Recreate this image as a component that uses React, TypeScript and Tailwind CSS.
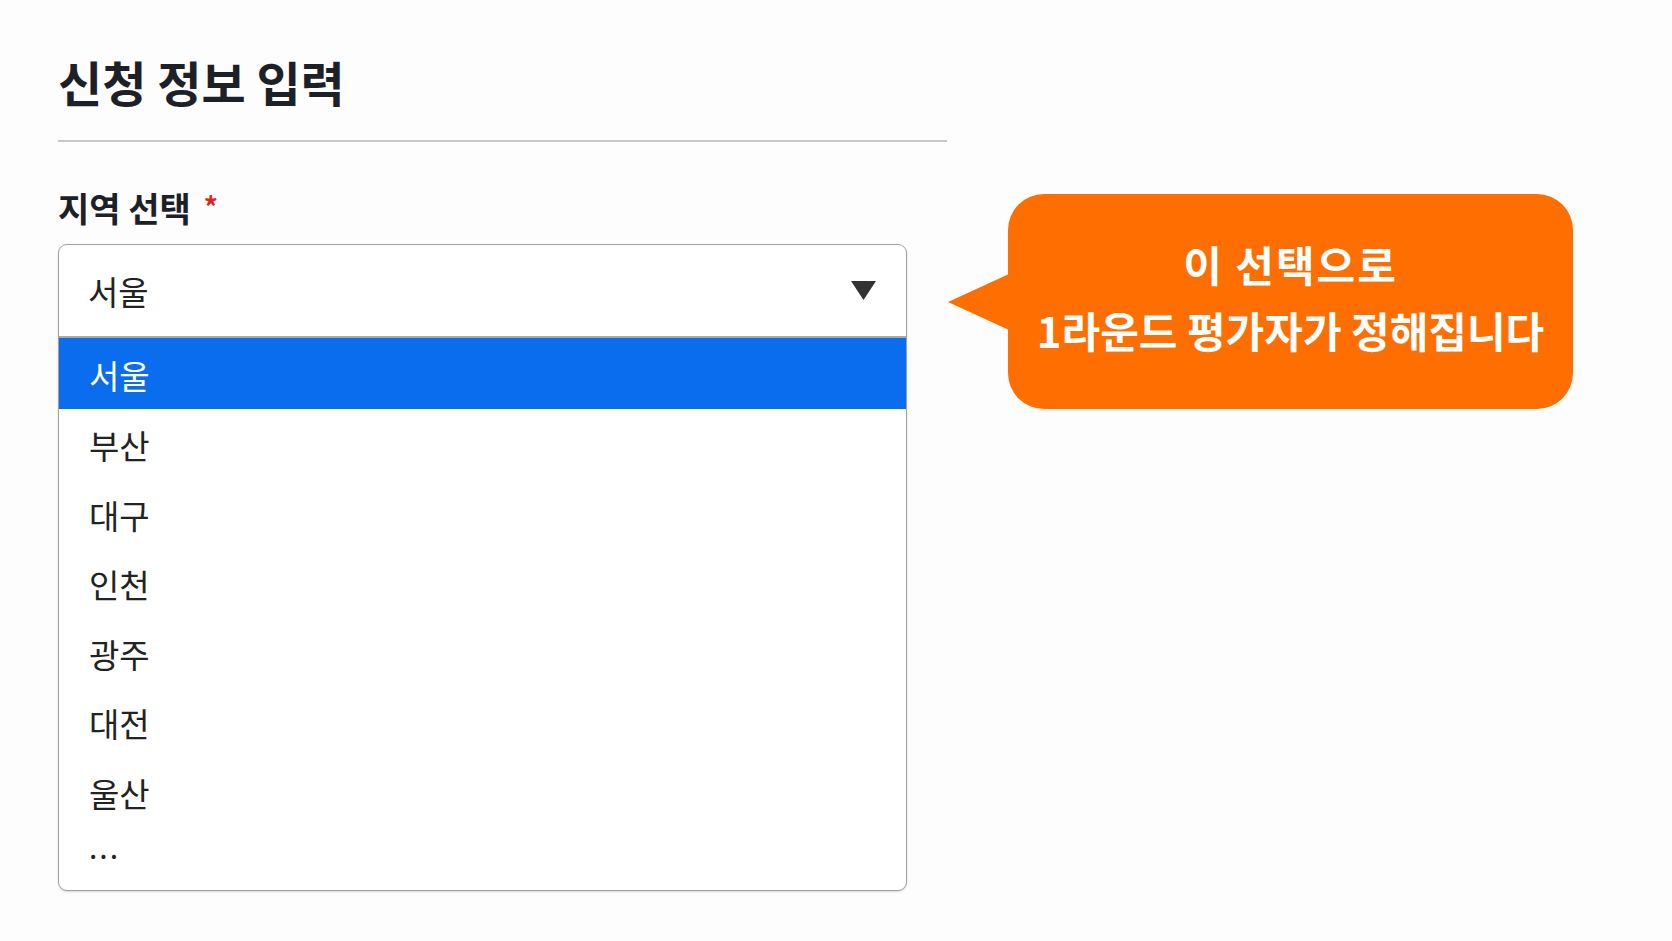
import React from "react";

const options = ["서울", "부산", "대구", "인천", "광주", "대전", "울산"];

export default function App() {
  return (
    <div
      className="w-[1672px] h-[941px] bg-[#fdfdfd] overflow-hidden"
      style={{ fontFamily: '"Noto Sans CJK KR", "Noto Sans", sans-serif' }}
    >
      <div className="pl-[58px] pt-[53px]">
        <h1 className="text-[48px] leading-[56px] font-bold text-[#1d2127] tracking-[0px]">
          신청 정보 입력
        </h1>
        <div className="mt-[31px] w-[889px] h-[2px] bg-[#c8c8c8]" />
        <div className="flex items-start">
          <div className="w-[849px] flex flex-col">
            <div className="mt-[45px] flex items-start text-[34px] leading-[42px] font-bold text-[#1d2127] tracking-[0px]">
              <span>지역 선택</span>
              <span className="ml-[13px] mt-[4px] text-[#e02424] text-[28px] leading-[30px]">*</span>
            </div>
            <div className="mt-[15px] h-[647px] border-[1.5px] border-[#a0a0a0] rounded-[9px] bg-white flex flex-col overflow-hidden shadow-[0_1px_2px_rgba(0,0,0,0.15)]">
              <div className="h-[93px] shrink-0 flex items-center justify-between pl-[29px] pr-[29px] border-b-[2px] border-[#a9a9a9]">
                <span className="text-[33px] text-[#222] pt-[2px]">서울</span>
                <svg width="27" height="21" viewBox="0 0 27 21">
                  <path d="M1 1 L26 1 L13.5 20 Z" fill="#333" />
                </svg>
              </div>
              {options.map((o, i) => (
                <div
                  key={o}
                  className={
                    i === 0
                      ? "h-[71px] shrink-0 flex items-center pl-[30px] pt-[4px] bg-[#0a6ded] text-white text-[33px]"
                      : "h-[69.5px] shrink-0 flex items-center pl-[30px] pt-[4px] text-[#222] text-[33px]"
                  }
                >
                  {o}
                </div>
              ))}
              <div className="flex-1 pl-[30px] text-[#222] text-[30px] leading-[40px] tracking-[2px] pt-[0px]">
                ...
              </div>
            </div>
          </div>
          <div className="ml-[41px] mt-[52px] flex items-center">
            <svg width="61" height="56" viewBox="0 0 61 56" className="-mr-[1px]">
              <path d="M0 28 L61 0 L61 56 Z" fill="#fe6e00" />
            </svg>
            <div className="w-[565px] h-[215px] rounded-[36px] bg-[#fe6e00] flex flex-col items-center justify-center pb-[9px] text-white font-bold text-[42px] leading-[66px]">
              <div className="tracking-[2px]">이 선택으로</div>
              <div className="tracking-[0px]">1라운드 평가자가 정해집니다</div>
            </div>
          </div>
        </div>
      </div>
    </div>
  );
}
